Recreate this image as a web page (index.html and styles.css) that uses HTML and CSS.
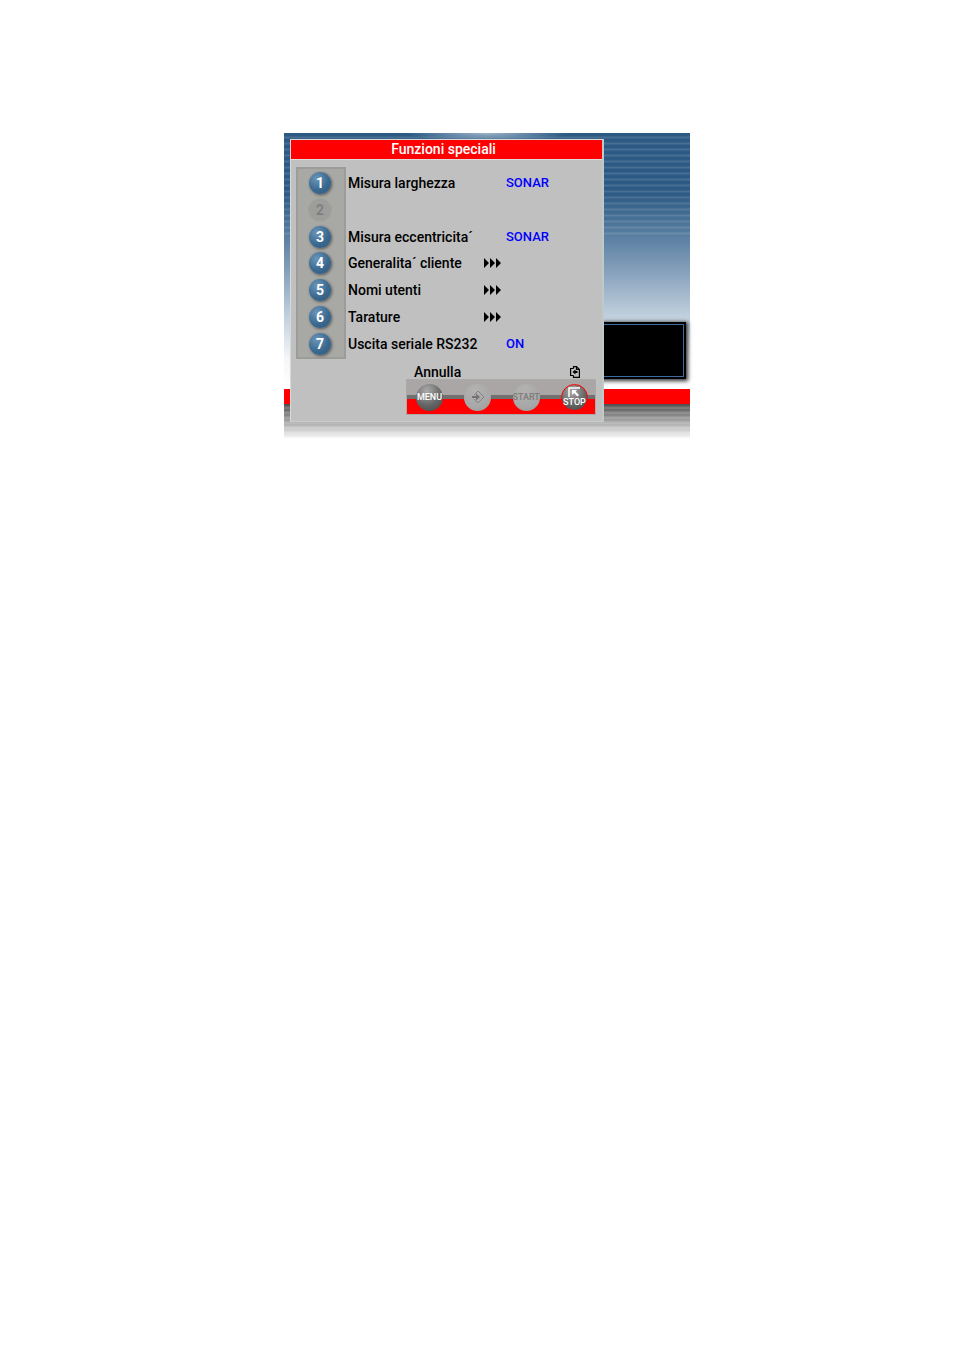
FILE: index.html
```html
<!DOCTYPE html>
<html lang="it">
<head>
<meta charset="utf-8">
<title>Funzioni speciali</title>
<link rel="stylesheet" href="styles.css">
</head>
<body>
<main class="page">
  <div class="screen">
    <div class="backdrop">
      <div class="sky"><div class="display"></div></div>
      <div class="band"></div>
      <div class="floor"></div>
    </div>
    <section class="dialog" aria-labelledby="title">
      <h1 class="title" id="title">Funzioni speciali</h1>
      <div class="options">
        <div class="row"><button class="key" id="k1">1</button><label for="k1">Misura larghezza</label><span class="value">SONAR</span></div>
        <div class="row"><button class="key off" disabled>2</button></div>
        <div class="row"><button class="key" id="k3">3</button><label for="k3">Misura eccentricita´</label><span class="value">SONAR</span></div>
        <div class="row"><button class="key" id="k4">4</button><label for="k4">Generalita´ cliente</label><svg class="more" viewBox="0 0 17 10"><path d="M0 0l5 5-5 5zM6 0l5 5-5 5zM12 0l5 5-5 5z"/></svg></div>
        <div class="row"><button class="key" id="k5">5</button><label for="k5">Nomi utenti</label><svg class="more" viewBox="0 0 17 10"><path d="M0 0l5 5-5 5zM6 0l5 5-5 5zM12 0l5 5-5 5z"/></svg></div>
        <div class="row"><button class="key" id="k6">6</button><label for="k6">Tarature</label><svg class="more" viewBox="0 0 17 10"><path d="M0 0l5 5-5 5zM6 0l5 5-5 5zM12 0l5 5-5 5z"/></svg></div>
        <div class="row"><button class="key" id="k7">7</button><label for="k7">Uscita seriale RS232</label><span class="value">ON</span></div>
      </div>
      <div class="actions">
        <div class="hints">
          <label for="menu">Annulla</label>
          <svg class="exit" viewBox="0 0 10 12"><path d="M3.500 2.500V.600H6.500L9.400 3.500V11.400H3.500V9.500M3.500 2.500H.600V9.500H3.500M6.500 .600V3.500H9.400" fill="none" stroke="#000" stroke-width="1.200"/><path d="M2.500 6L5.500 3.500V5H7.500V7H5.500V8.500z"/></svg>
        </div>
        <div class="bar">
          <button class="knob" id="menu">MENU</button>
          <button class="knob dim" disabled aria-label="Invio"><svg class="enter" viewBox="0 0 14 14"><path d="M3 5L7 1l6 6-6 6-4-4" fill="none" stroke="#858585"/><path d="M1 6h4V3.500L9 7l-4 3.500V8H1z" fill="#737373"/></svg></button>
          <button class="knob dim" disabled>START</button>
          <button class="knob stop"><svg class="arrow" viewBox="0 0 12 10"><path d="M1 10V1H12" fill="none" stroke="#fff" stroke-width="1.500"/><path d="M4 3h5L7.500 4.500L11 8L9.500 9.500L6 6L4 8z" fill="#fff"/></svg>STOP</button>
        </div>
      </div>
    </section>
  </div>
</main>
</body>
</html>
```
FILE: styles.css
```css
* { box-sizing: border-box; }
body { margin: 0; background: #fff; font-family: Roboto, "Liberation Sans", sans-serif; }
button { border: 0; padding: 0; font-family: inherit; }
.page {
  display: grid;
  grid-template-columns: 284fr minmax(406px, 406fr) 265fr;
  min-height: 100vh;
  padding: 133px 0;
  align-items: start;
}
.screen { grid-column: 2; display: grid; }
.backdrop, .dialog { grid-area: 1 / 1; }
.backdrop { display: grid; grid-template-rows: 1fr 15px 34px; }
.sky {
  display: flex;
  align-items: flex-end;
  padding: 0 6px 12px 12px;
  background:
    radial-gradient(ellipse 80px 9px at 50% 0, #9db5ca, transparent),
    repeating-linear-gradient(rgba(255,255,255,0) 0 3px, rgba(255,255,255,.12) 4px 5px, rgba(255,255,255,0) 6px) 0 0 / 100% 102px no-repeat,
    linear-gradient(#2d5a84 0, #2d5a84 60px, #5b80a2 105px, #829db9 135px, #c3d2df 185px, #f4f6f8 225px, #fff);
}
.display {
  flex: 1;
  height: 53px;
  background: #000;
  border: 1px solid #3d6d9e;
  box-shadow: 0 0 0 2px #000, 1px 1px 4px 3px #333;
}
.band { background: #f00; }
.floor {
  background:
    linear-gradient(rgba(255,255,255,0), rgba(255,255,255,.95)),
    repeating-linear-gradient(#505050 0 2px, #6a6a6a 3px 5px);
}
.dialog {
  z-index: 1;
  display: flex;
  flex-direction: column;
  margin: 6px 86px 16px 6px;
  border: 1px solid #d5dbd8;
  border-right: 2px solid #bfc9c8;
  border-bottom-color: #ccc;
  background: #c0c0c0;
}
.title {
  margin: 0;
  height: 20px;
  padding-right: 6px;
  border-bottom: 1px solid #ddd;
  background: #f00;
  color: #fff;
  font-size: 14px;
  font-weight: 500;
  line-height: 18px;
  text-align: center;
}
.options {
  display: grid;
  height: 192px;
  grid-auto-rows: 1fr;
  margin: 7px 5px 0;
  padding: 3px 0 2px;
  background: linear-gradient(#a8a8a4, #a8a8a4) 2px 2px / 46px 188px no-repeat, linear-gradient(#9c9c9a, #9c9c9a) 0 0 / 50px 100% no-repeat;
}
.row {
  display: grid;
  grid-template-columns: 50px 136px 22px 1fr;
  align-items: center;
  font-size: 14px;
  font-weight: 500;
  line-height: 16px;
}
.row label { padding-left: 2px; white-space: nowrap; }
.value { grid-column: 4; color: #00f; padding-left: 2px; font-size: 13px; }
.more { grid-column: 3; width: 17px; height: 10px; margin-left: 2px; }
.key {
  width: 22px;
  height: 22px;
  margin-left: 13px;
  border-radius: 50%;
  background: radial-gradient(circle at 35% 30%, #6c96b8, #3a688f 55%, #2c587f);
  box-shadow: 1px 1px 3px #555;
  color: #fff;
  font-size: 14px;
  font-weight: 700;
  line-height: 22px;
}
.key.off { background: #9d9d9b; box-shadow: 0 0 2px #999; color: #7c7c7c; font-weight: 500; }
.actions { width: 190px; margin: 6px 6px 6px auto; }
.hints { display: flex; justify-content: space-between; align-items: center; height: 14px; padding: 0 16px 0 8px; font-size: 14px; font-weight: 500; line-height: 14px; }
.exit { width: 10px; height: 12px; }
.bar {
  display: flex;
  justify-content: space-between;
  align-items: center;
  height: 36px;
  padding: 0 7px 0 9px;
  border: 1px solid #aaa;
  background: linear-gradient(#aaa6a5 0 15px, #707070 15px 19px, #f00 19px);
}
.knob {
  display: flex;
  flex-direction: column;
  align-items: center;
  justify-content: center;
  width: 27px;
  height: 27px;
  border-radius: 50%;
  background: radial-gradient(circle at 40% 25%, #aaa, #666 55%, #444);
  color: #fff;
  font-size: 9px;
  font-weight: 500;
  line-height: 10px;
}
.dim { background: radial-gradient(circle at 40% 25%, #b4b2b1, #a8a8a8 60%, #999); color: #7c7c7c; }
.stop { border: 1px solid #f00; }
.enter { width: 14px; height: 14px; }
.arrow { width: 12px; height: 10px; }
```
